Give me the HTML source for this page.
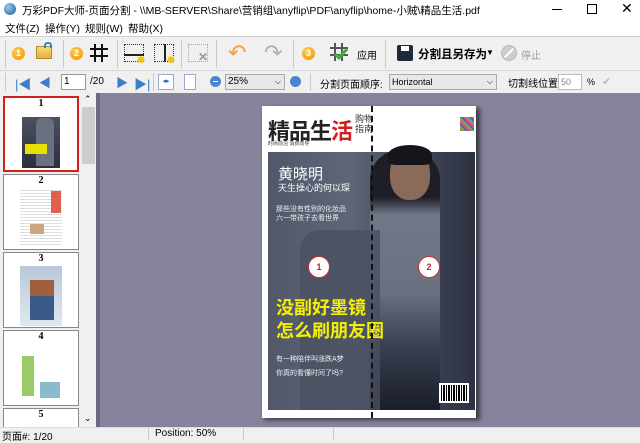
<!DOCTYPE html>
<html><head><meta charset="utf-8"><style>
*{margin:0;padding:0;box-sizing:border-box}
body{width:640px;height:440px;overflow:hidden;background:#f0f0f0;font-family:"Liberation Sans","Noto Sans CJK SC",sans-serif;font-size:12px;color:#000;position:relative}
.abs{position:absolute}
.t{font-size:12px;white-space:nowrap}
.sep{position:absolute;width:1px;background:#c8c8c8}
.num{position:absolute;width:13px;height:13px;border-radius:50%;background:radial-gradient(circle at 40% 35%,#ffd24a,#f08a00);color:#fff;font-size:9px;font-weight:bold;text-align:center;line-height:13px}
.thumb{position:absolute;left:3px;width:76px;height:76px;background:#fff;border:1px solid #888}
.thumb b{display:block;text-align:center;font-family:"Liberation Serif",serif;font-size:10px;line-height:11px}
</style></head><body>
<div class="abs" style="left:0;top:0;width:640px;height:18px;background:#fff"></div>
<div class="abs" style="left:4px;top:3px;width:12px;height:12px;border-radius:50%;background:radial-gradient(circle at 35% 35%,#9cc8ee,#1c5b9c)"></div>
<div class="abs t" style="left:22px;top:3px;font-size:10.5px">万彩PDF大师-页面分割 - \\MB-SERVER\Share\营销组\anyflip\PDF\anyflip\home-小贼\精品生活.pdf</div>
<div class="abs" style="left:552px;top:9px;width:10px;height:1px;background:#000"></div>
<div class="abs" style="left:587px;top:4px;width:10px;height:10px;border:1px solid #000"></div>
<div class="abs t" style="left:621px;top:0px;font-size:14px">✕</div>
<div class="abs" style="left:0;top:18px;width:640px;height:18px;background:#fff"></div>
<div class="abs t" style="left:5px;top:21px;font-size:10.5px">文件(Z)</div>
<div class="abs t" style="left:45px;top:21px;font-size:10.5px">操作(Y)</div>
<div class="abs t" style="left:85px;top:21px;font-size:10.5px">规则(W)</div>
<div class="abs t" style="left:128px;top:21px;font-size:10.5px">帮助(X)</div>
<div class="abs" style="left:0;top:36px;width:640px;height:1px;background:#d0d0d0"></div>
<div class="sep" style="left:5px;top:40px;height:28px"></div>
<div class="num" style="left:12px;top:47px">1</div>
<div class="abs" style="left:36px;top:46px;width:16px;height:13px;background:linear-gradient(#f7dc7a,#e3b13a);border:1px solid #b48a2a"></div>
<div class="abs" style="left:44px;top:42px;width:8px;height:6px;border:2px solid #3a7fc0;border-radius:50% 50% 0 0;border-bottom:none"></div>
<div class="sep" style="left:63px;top:40px;height:28px"></div>
<div class="num" style="left:70px;top:47px">2</div>
<svg class="abs" style="left:90px;top:44px" width="18" height="18"><path d="M5 0V18M12 0V18M0 5H18M0 12H18" stroke="#111" stroke-width="2"/></svg>
<div class="sep" style="left:117px;top:40px;height:28px"></div>
<div class="abs" style="left:124px;top:44px;width:20px;height:18px;border:1px dotted #333"></div>
<div class="abs" style="left:124px;top:54px;width:20px;height:2px;background:#222"></div>
<div class="abs t" style="left:136px;top:53px;color:#f5c400;font-size:12px">✸</div>
<div class="abs" style="left:154px;top:44px;width:20px;height:18px;border:1px dotted #333"></div>
<div class="abs" style="left:164px;top:44px;width:2px;height:18px;background:#222"></div>
<div class="abs t" style="left:166px;top:53px;color:#f5c400;font-size:12px">✸</div>
<div class="sep" style="left:181px;top:40px;height:28px"></div>
<div class="abs" style="left:188px;top:44px;width:20px;height:18px;border:1px dotted #aaa"></div>
<div class="abs t" style="left:198px;top:50px;color:#999;font-size:12px;font-weight:bold">✕</div>
<div class="sep" style="left:216px;top:40px;height:28px"></div>
<div class="abs t" style="left:228px;top:40px;font-size:22px;color:#f0a040">↶</div>
<div class="abs t" style="left:264px;top:40px;font-size:22px;color:#b0b0b0">↷</div>
<div class="sep" style="left:293px;top:40px;height:28px"></div>
<div class="num" style="left:302px;top:47px">3</div>
<svg class="abs" style="left:330px;top:43px" width="18" height="18"><path d="M5 0V18M12 0V18M0 5H18M0 12H18" stroke="#555" stroke-width="2"/><path d="M5 11L9 15L17 6" stroke="#3cb43c" stroke-width="3" fill="none"/></svg>
<div class="abs t" style="left:357px;top:47px;font-size:10px">应用</div>
<div class="sep" style="left:385px;top:40px;height:28px"></div>
<div class="abs" style="left:397px;top:45px;width:16px;height:16px;background:#1e2a3a;border-radius:2px"></div>
<div class="abs" style="left:401px;top:46px;width:8px;height:5px;background:#fff"></div>
<div class="abs t" style="left:418px;top:46px;font-size:11.5px;font-weight:bold">分割且另存为</div>
<div class="abs t" style="left:486px;top:48px;font-size:8px">▼</div>
<div class="abs" style="left:501px;top:45px;width:16px;height:16px;border-radius:50%;background:#ccc;border:1px solid #bbb"></div>
<div class="abs" style="left:508px;top:47px;width:2px;height:12px;background:#fff;transform:rotate(45deg)"></div>
<div class="abs t" style="left:521px;top:47px;font-size:10px;color:#999">停止</div>
<div class="abs" style="left:0;top:70px;width:640px;height:1px;background:#d8d8d8"></div>
<div class="sep" style="left:5px;top:73px;height:18px"></div>
<div class="abs t" style="left:15px;top:74px;color:#3a7fc8;font-size:13px">|◀</div>
<div class="abs t" style="left:39px;top:74px;color:#3a7fc8;font-size:12px">◀</div>
<div class="abs" style="left:61px;top:74px;width:25px;height:16px;background:#fff;border:1px solid #999;font-size:10px;padding-left:2px;line-height:14px">1</div>
<div class="abs t" style="left:90px;top:76px;font-size:10px">/20</div>
<div class="abs t" style="left:116px;top:74px;color:#3a7fc8;font-size:12px">▶</div>
<div class="abs t" style="left:134px;top:74px;color:#3a7fc8;font-size:13px">▶|</div>
<div class="sep" style="left:153px;top:73px;height:18px"></div>
<div class="abs" style="left:158px;top:74px;width:16px;height:16px;border:1px solid #9ac;background:#fff;font-size:7px;color:#36c;text-align:center;line-height:14px">◂▸</div>
<div class="abs" style="left:184px;top:74px;width:12px;height:16px;border:1px solid #9ac;background:#fff"></div>
<div class="abs" style="left:210px;top:76px;width:11px;height:11px;border-radius:50%;background:#4a86d0"></div>
<div class="abs" style="left:213px;top:81px;width:5px;height:1px;background:#fff"></div>
<div class="abs" style="left:225px;top:74px;width:60px;height:16px;background:#e8e8e8;border:1px solid #aaa;font-size:10px;padding-left:2px;line-height:14px">25%<span style="position:absolute;right:3px;font-size:8px">⌵</span></div>
<div class="abs" style="left:290px;top:76px;width:11px;height:11px;border-radius:50%;background:#4a86d0"></div>
<div class="sep" style="left:310px;top:73px;height:18px"></div>
<div class="abs t" style="left:320px;top:76px;font-size:10px">分割页面顺序:</div>
<div class="abs" style="left:389px;top:74px;width:108px;height:16px;background:#e8e8e8;border:1px solid #aaa;font-size:9px;padding-left:2px;line-height:14px">Horizontal<span style="position:absolute;right:3px;font-size:8px">⌵</span></div>
<div class="abs t" style="left:508px;top:75px;font-size:10px">切割线位置</div>
<div class="abs" style="left:558px;top:74px;width:24px;height:16px;background:#fff;border:1px solid #bbb;font-size:9px;color:#888;padding-left:2px;line-height:14px">50</div>
<div class="abs t" style="left:587px;top:77px;font-size:9px">%</div>
<div class="abs t" style="left:602px;top:75px;font-size:11px;color:#bbb">✔</div>
<div class="abs" style="left:0;top:93px;width:96px;height:334px;background:#f0f0f0"></div>
<div class="abs" style="left:81px;top:93px;width:15px;height:334px;background:#f0f0f0"></div>
<div class="abs" style="left:82px;top:107px;width:13px;height:57px;background:#cdcdcd"></div>
<div class="abs t" style="left:84px;top:94px;font-size:9px">⌃</div>
<div class="abs t" style="left:84px;top:413px;font-size:9px">⌄</div>
<div class="abs" style="left:96px;top:93px;width:4px;height:334px;background:#6c6b7e"></div>
<div class="thumb" style="top:96px;border:2px solid #d02020"><b>1</b><div style="margin:1px auto;width:38px;height:58px;background:linear-gradient(#fff 0 12%,#4a5160 12%,#2a2f3c);position:relative"><div style="position:absolute;left:14px;top:8px;width:18px;height:48px;background:#6a7080;border-radius:6px 6px 0 0"></div><div style="position:absolute;left:3px;top:34px;width:22px;height:10px;background:#e8e000"></div></div></div>
<div class="thumb" style="top:174px"><b>2</b><div style="margin:2px auto;width:42px;height:58px;background:repeating-linear-gradient(#fff 0 2px,#ddd 2px 3px);position:relative"><div style="position:absolute;left:31px;top:3px;width:10px;height:22px;background:#e06050"></div><div style="position:absolute;left:10px;top:36px;width:14px;height:10px;background:#c9a880"></div></div></div>
<div class="thumb" style="top:252px"><b>3</b><div style="margin:2px auto;width:42px;height:60px;background:linear-gradient(#b8c8d8,#e0e8f0);position:relative"><div style="position:absolute;left:10px;top:14px;width:24px;height:40px;background:linear-gradient(#a06040 0 40%,#3a5a8a 40%)"></div></div></div>
<div class="thumb" style="top:330px"><b>4</b><div style="margin:2px auto;width:42px;height:60px;background:#fff;position:relative"><div style="position:absolute;left:2px;top:12px;width:12px;height:40px;background:#9c6"></div><div style="position:absolute;left:20px;top:38px;width:20px;height:16px;background:#8bc"></div></div></div>
<div class="thumb" style="top:408px;height:20px"><b>5</b></div>
<div class="abs" style="left:100px;top:93px;width:540px;height:334px;background:#86849c"></div>
<div class="abs" style="left:264px;top:108px;width:216px;height:312px;background:#3a3a44;filter:blur(2px)"></div>
<div class="abs" style="left:262px;top:106px;width:214px;height:312px;background:#fff"></div>
<div class="abs" style="left:268px;top:152px;width:207px;height:258px;background:linear-gradient(90deg,#50586a,#5e6678 40%,#4a5162 60%,#2c3242)"></div>
<div class="abs" style="left:370px;top:150px;width:70px;height:260px;background:linear-gradient(#1e1e26 0 18%,#707888 25%,#6a7080 55%,#3a4050 75%,#1a1d2a);border-radius:30px 30px 0 0"></div>
<div class="abs" style="left:300px;top:230px;width:80px;height:180px;background:#4a5060;border-radius:20px 0 0 0;opacity:.8"></div>
<div class="abs" style="left:390px;top:150px;width:40px;height:50px;background:#8a6a58;border-radius:45%;"></div>
<div class="abs" style="left:388px;top:145px;width:44px;height:20px;background:#15151a;border-radius:50% 50% 20% 20%"></div>
<div class="abs t" style="left:268px;top:114px;font-size:22px;font-weight:bold;color:#222;letter-spacing:-1px">精品生<span style="color:#d02020">活</span></div>
<div class="abs t" style="left:355px;top:114px;font-size:9px;color:#333;line-height:10px">购物<br>指南</div>
<div class="abs t" style="left:268px;top:140px;font-size:5px;color:#333">时尚前沿 消费向导</div>
<div class="abs" style="left:460px;top:117px;width:14px;height:14px;background:repeating-linear-gradient(45deg,#e55 0 2px,#5b5 2px 4px,#55e 4px 6px)"></div>
<div class="abs t" style="left:278px;top:163px;font-size:15px;color:#fff">黄晓明</div>
<div class="abs t" style="left:278px;top:181px;font-size:9px;color:#fff">天生操心的何以琛</div>
<div class="abs t" style="left:276px;top:204px;font-size:7px;color:#eee">那些没有性别的化妆品</div>
<div class="abs t" style="left:276px;top:213px;font-size:7px;color:#eee">六一带孩子去看世界</div>
<div class="abs" style="left:308px;top:256px;width:22px;height:22px;border-radius:50%;background:#fff;border:1px solid #d03030;color:#d02020;font-size:9px;text-align:center;line-height:20px;font-weight:bold">1</div>
<div class="abs" style="left:418px;top:256px;width:22px;height:22px;border-radius:50%;background:#fff;border:1px solid #d03030;color:#d02020;font-size:9px;text-align:center;line-height:20px;font-weight:bold">2</div>
<div class="abs t" style="left:276px;top:297px;font-size:18px;font-weight:bold;color:#f4f000;line-height:23px">没副好墨镜<br>怎么刷朋友圈</div>
<div class="abs t" style="left:276px;top:354px;font-size:7px;color:#eee">有一种陪伴叫涨跌A梦</div>
<div class="abs t" style="left:276px;top:368px;font-size:7px;color:#eee">你真的看懂时间了吗?</div>
<div class="abs" style="left:439px;top:383px;width:30px;height:20px;background:repeating-linear-gradient(90deg,#000 0 1px,#fff 1px 2px,#000 2px 4px,#fff 4px 5px);border:2px solid #fff"></div>
<div class="abs" style="left:371px;top:106px;width:0;height:312px;border-left:2px dashed #111"></div>
<div class="abs" style="left:0;top:427px;width:640px;height:13px;background:#f0f0f0;border-top:1px solid #ddd"></div>
<div class="abs t" style="left:2px;top:428px;font-size:10px">页面#: 1/20</div>
<div class="sep" style="left:148px;top:428px;height:12px"></div>
<div class="abs t" style="left:155px;top:428px;font-size:10px">Position: 50%</div>
<div class="sep" style="left:243px;top:428px;height:12px"></div>
<div class="sep" style="left:333px;top:428px;height:12px"></div>
</body></html>
